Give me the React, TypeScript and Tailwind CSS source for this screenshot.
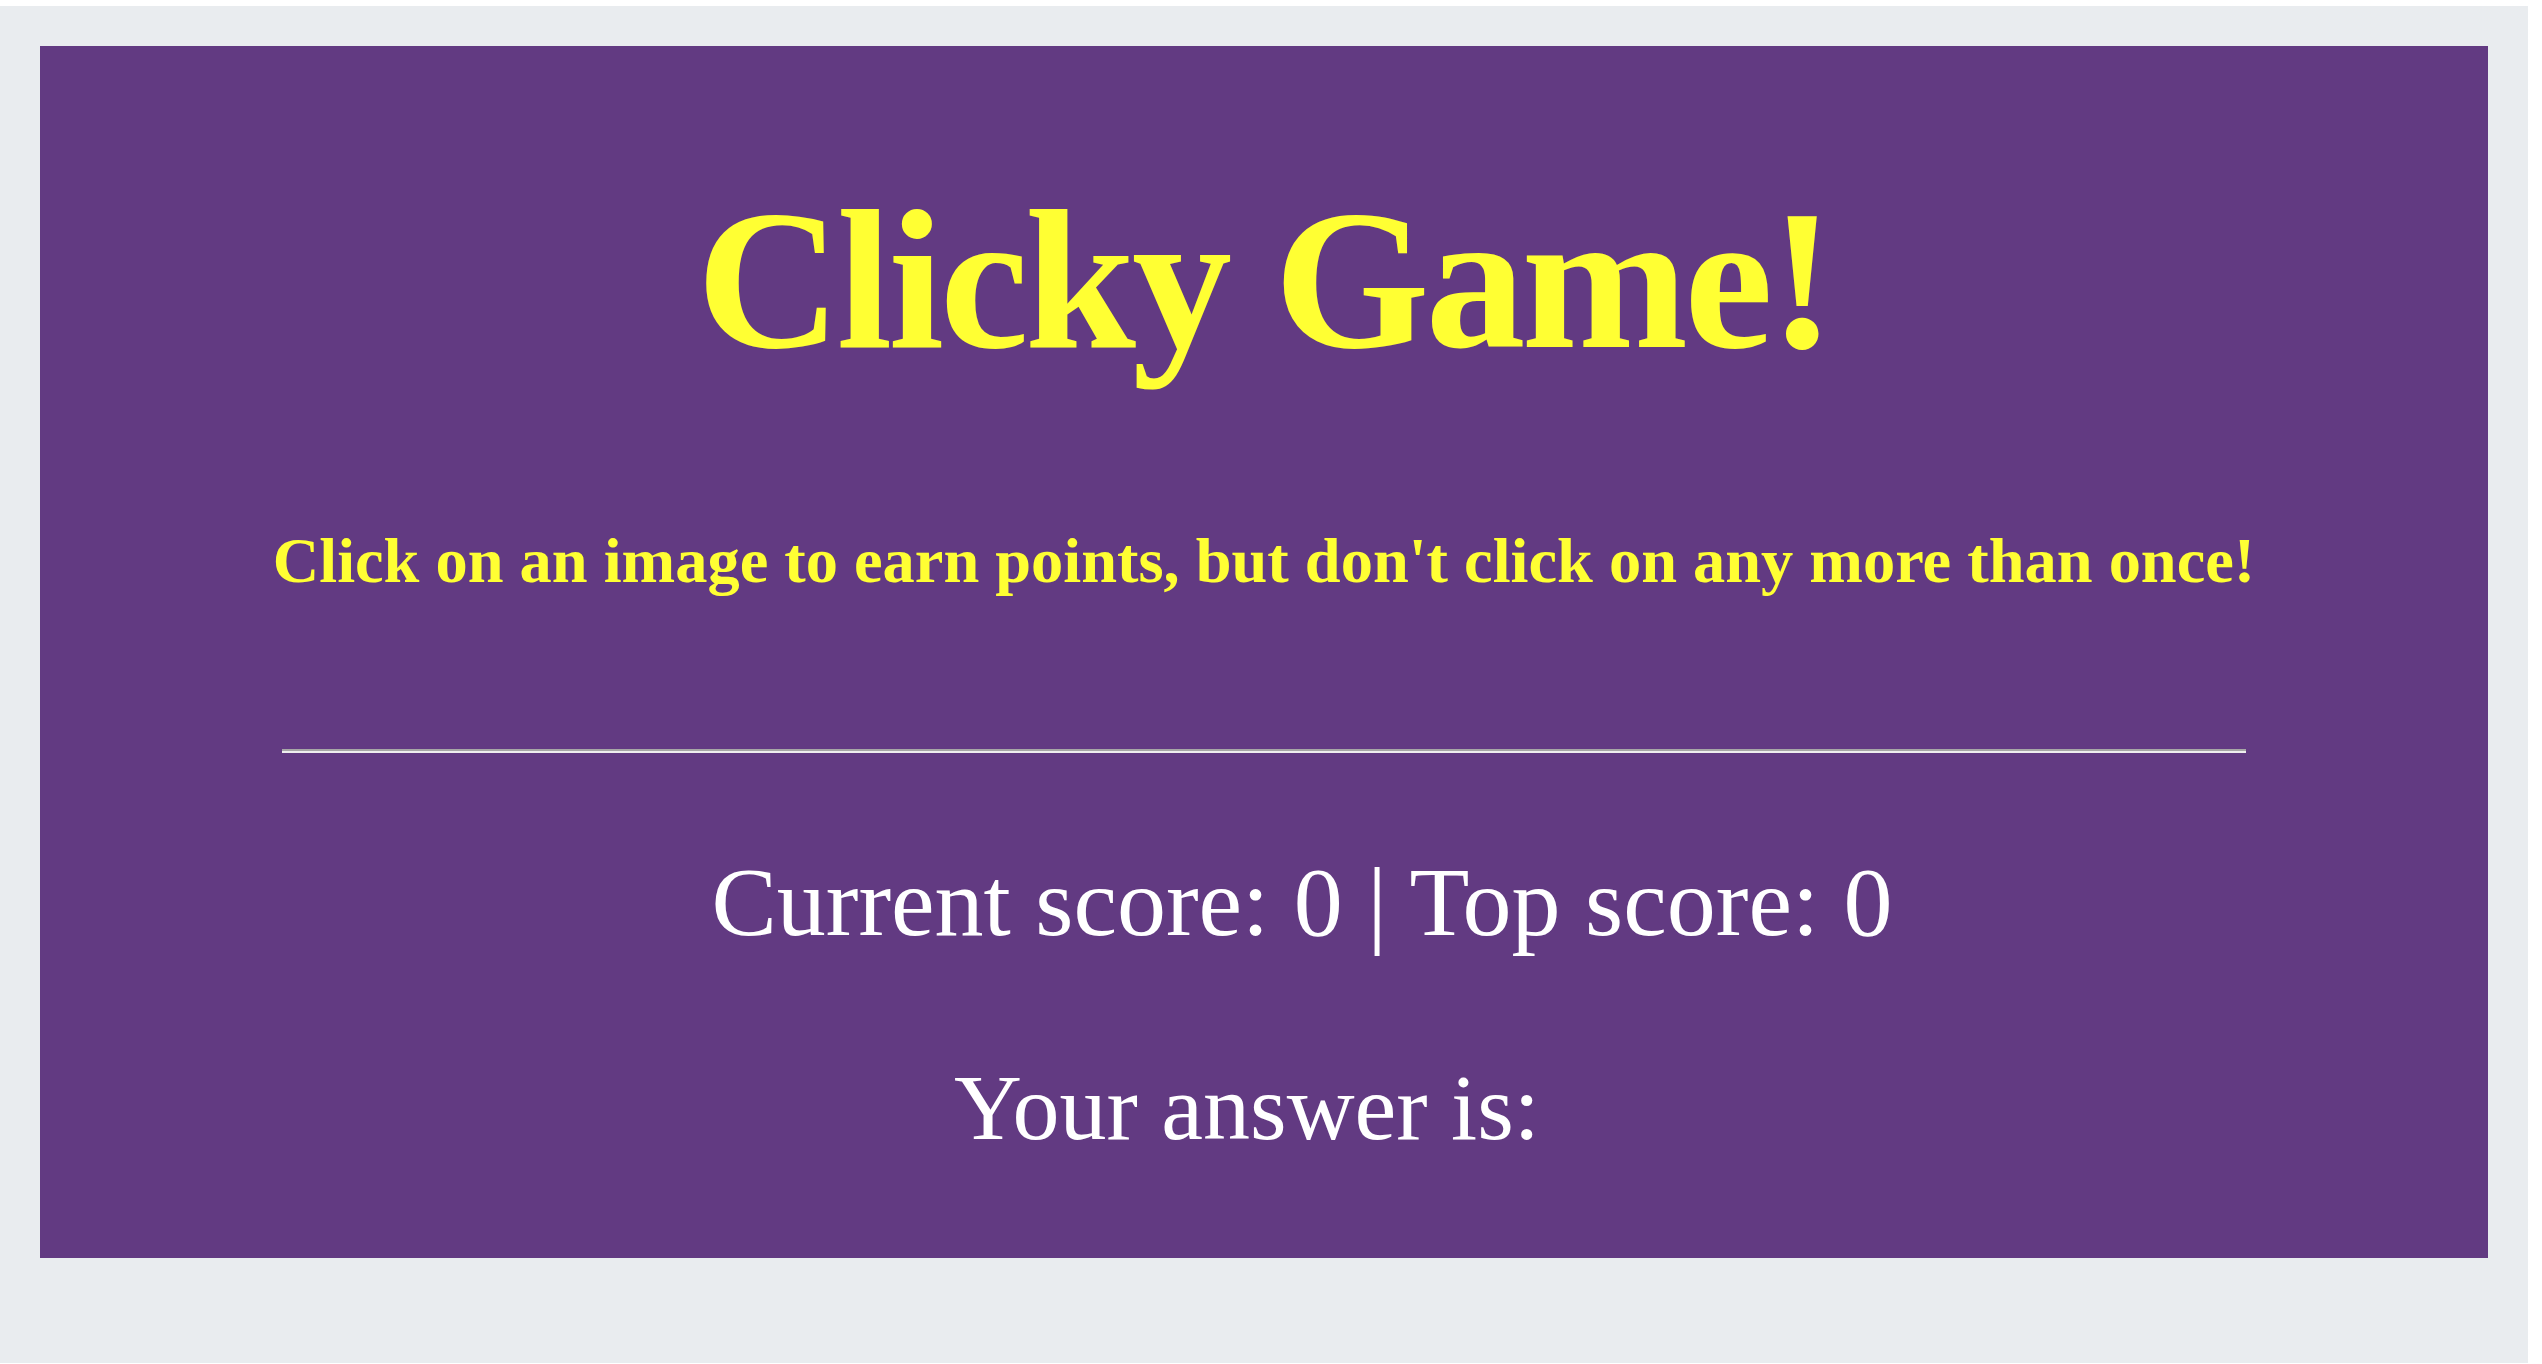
export default function App() {
  return (
    <div className="min-h-screen bg-white pt-[6px]" style={{ fontFamily: '"Liberation Serif", "Times New Roman", serif' }}>
      <div className="h-[1357px] w-[2528px] bg-[#e9ecef] px-[40px] pt-[40px]">
        <div className="bg-[#623a82] pt-[134px] pb-[104px] text-center">
          <h1 className="text-[200px] font-bold leading-none tracking-[-4px] text-[#ffff33]">Clicky Game!</h1>
          <h3 className="mt-[149px] whitespace-nowrap text-[64.4px] font-bold leading-none text-[#ffff33]">
            Click on an image to earn points, but don't click on any more than once!
          </h3>
          <hr className="mx-[242px] mt-[156px] border-t-2 border-b-2 border-t-[#a6a6a6] border-b-[#eeeeee]" />
          <div className="mt-[100px] pl-[76px] text-[98px] leading-none text-white">Current score: 0 | Top score: 0</div>
          <div className="mt-[109px] pr-[34px] text-[94px] leading-none text-white">Your answer is: </div>
        </div>
      </div>
    </div>
  );
}
